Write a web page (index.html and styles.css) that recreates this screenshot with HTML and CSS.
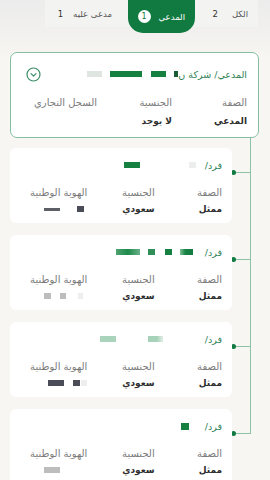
FILE: index.html
```html
<!DOCTYPE html>
<html lang="ar" dir="rtl">
<head>
<meta charset="utf-8">
<title>الأطراف</title>
<link rel="stylesheet" href="styles.css">
</head>
<body>
<nav class="tabs">
  <div class="tab tab-all"><span class="tab-label">الكل</span><span class="tab-count">2</span></div>
  <div class="tab tab-active"><span class="tab-label">المدعي</span><span class="badge">1</span></div>
  <div class="tab tab-def"><span class="tab-label">مدعى عليه</span><span class="tab-count">1</span></div>
</nav>

<section class="main-card">
  <div class="main-title">
    <div class="title-text main-text">المدعي/ شركة ن<span class="rd rd-dark w4 g0"></span><span class="rd rd-green w15 g8"></span><span class="rd rd-green w32 g9"></span><span class="rd rd-light w15 g8"></span></div>
    <svg class="chev" width="15" height="15" viewBox="0 0 15 15"><circle cx="7.5" cy="7.5" r="6.5" fill="none" stroke="#3c8f68" stroke-width="1.2"/><path d="M5 6.6 L7.5 9 L10 6.6" fill="none" stroke="#3c8f68" stroke-width="1.2" stroke-linecap="round" stroke-linejoin="round"/></svg>
  </div>
  <div class="grid main-grid">
    <div class="lbl">الصفة</div><div class="lbl">الجنسية</div><div class="lbl">السجل التجاري</div>
    <div class="val">المدعي</div><div class="val">لا يوجد</div><div class="val"></div>
  </div>
</section>

<div class="timeline">
  <div class="row first">
    <div class="conn"><div class="elbow"></div><div class="hline"><span class="dot"></span><span class="line"></span></div><div class="tail"></div></div>
    <div class="card-col">
      <div class="card">
        <div class="title-text">فرد/<span class="rd rd-pale w7 g9"></span><span class="rd rd-green w16 g49"></span></div>
        <div class="grid">
          <div class="lbl">الصفة</div><div class="lbl">الجنسية</div><div class="lbl">الهوية الوطنية</div>
          <div class="val">ممثل</div><div class="val">سعودي</div><div class="val"><span class="rd rd-slate w7 g3"></span><span class="rd rd-line w16 g17"></span></div>
        </div>
      </div>
    </div>
  </div>

  <div class="row">
    <div class="conn"><div class="elbow"></div><div class="hline"><span class="dot"></span><span class="line"></span></div><div class="tail"></div></div>
    <div class="card-col">
      <div class="card">
        <div class="title-text">فرد/<span class="rd rd-green2 w13 g12"></span><span class="rd rd-green w7 g8"></span><span class="rd rd-green3 w7 g10"></span><span class="rd rd-green4 w24 g8"></span></div>
        <div class="grid">
          <div class="lbl">الصفة</div><div class="lbl">الجنسية</div><div class="lbl">الهوية الوطنية</div>
          <div class="val">ممثل</div><div class="val">سعودي</div><div class="val"><span class="rd rd-faint w5 g4"></span><span class="rd rd-gray w6 g12"></span><span class="rd rd-gray w7 g9"></span></div>
        </div>
      </div>
    </div>
  </div>

  <div class="row">
    <div class="conn"><div class="elbow"></div><div class="hline"><span class="dot"></span><span class="line"></span></div><div class="tail"></div></div>
    <div class="card-col">
      <div class="card">
        <div class="title-text">فرد/<span class="rd rd-mint2 w15 g42"></span><span class="rd rd-mint w16 g32"></span></div>
        <div class="grid">
          <div class="lbl">الصفة</div><div class="lbl">الجنسية</div><div class="lbl">الهوية الوطنية</div>
          <div class="val">ممثل</div><div class="val">سعودي</div><div class="val"><span class="rd rd-faint w6 g0"></span><span class="rd rd-slate w7 g1"></span><span class="rd rd-slate w16 g9"></span></div>
        </div>
      </div>
    </div>
  </div>

  <div class="row last">
    <div class="conn"><div class="elbow"></div><div class="hline"><span class="dot"></span><span class="line"></span></div><div class="tail"></div></div>
    <div class="card-col">
      <div class="card">
        <div class="title-text">فرد/<span class="rd rd-green w8 sq g16"></span></div>
        <div class="grid">
          <div class="lbl">الصفة</div><div class="lbl">الجنسية</div><div class="lbl">الهوية الوطنية</div>
          <div class="val">ممثل</div><div class="val">سعودي</div><div class="val"><span class="rd rd-gray w16 g27"></span></div>
        </div>
      </div>
    </div>
  </div>
</div>
</body>
</html>
```
FILE: styles.css
```css
* { box-sizing: border-box; }
html, body { margin: 0; padding: 0; }
body {
  width: 270px;
  height: 480px;
  overflow: hidden;
  font-family: "DejaVu Sans", "Noto Sans", sans-serif;
  background: linear-gradient(#ececec 0px, #f1f0ee 30px, #f7f6f2 60px, #f7f6f2 100%);
  color: #333;
}

/* Tabs */
.tabs {
  display: flex;
  margin: 0 12px 0 0;
  width: 213px;
  height: 27px;
  background: #f3f3f2;
  align-items: flex-start;
}
.tab {
  display: flex;
  align-items: center;
  height: 27px;
  font-size: 8.5px;
  color: #555;
}
.tab-count { color: #333; }
.tab-all { width: 63px; padding-right: 10px; gap: 14px; }
.tab-active {
  width: 67px;
  height: 33px;
  background: #117a41;
  color: #fff;
  border-radius: 0 0 15px 15px;
  padding-right: 10px;
  gap: 8px;
}
.tab-def { width: 83px; padding-right: 16px; gap: 10px; }
.badge {
  width: 13px;
  height: 13px;
  border-radius: 50%;
  background: #fff;
  color: #117a41;
  font-size: 8px;
  display: flex;
  align-items: center;
  justify-content: center;
}

/* Main card */
.main-card {
  margin: 25px 11px 0 10px;
  height: 86px;
  background: #fff;
  border: 1px solid #86bfa0;
  border-radius: 7px;
  padding: 14px 11px 0 11px;
}
.main-title {
  display: flex;
  justify-content: space-between;
  align-items: center;
  height: 14px;
}
.chev { margin-left: 4px; display: block; }
.title-text {
  display: flex;
  align-items: center;
  height: 14px;
  font-size: 9.5px;
  color: #2e7f57;
  white-space: nowrap;
}
.main-text { font-size: 9.5px; }
.grid {
  display: grid;
  grid-template-columns: repeat(3, 1fr);
  grid-auto-rows: 14px;
  row-gap: 2px;
  margin-top: 14px;
}
.main-grid { margin-top: 15px; row-gap: 4px; }
.lbl {
  font-size: 10px;
  color: #7b7b7b;
  line-height: 14px;
  white-space: nowrap;
}
.val {
  font-size: 9px;
  font-weight: bold;
  color: #2e2e2e;
  line-height: 14px;
  display: flex;
  align-items: center;
  white-space: nowrap;
}

/* redaction blocks (gap = distance from the item on their right) */
.rd { display: inline-block; height: 6px; flex: none; }
.sq { height: 7px; }
.rd-green { background: #15803f; }
.rd-green2 { background: linear-gradient(90deg, #7fbf97, #1a8446 40%, #117a41); }
.rd-green3 { background: #2f8f57; }
.rd-green4 { background: linear-gradient(90deg, #4fa271, #1d8a4a 50%, #6bb28a); }
.rd-dark { background: #1b5e36; }
.rd-light { background: #dfe6e1; }
.rd-pale { background: #eceeed; }
.rd-mint { background: #a9d3bb; }
.rd-mint2 { background: linear-gradient(90deg, #a6d2b9 60%, #e3efe8); }
.rd-slate { background: #4a4d57; }
.rd-gray { background: #bdbdbd; }
.rd-faint { background: #eeeeee; }
.rd-line { background: #5c5f66; height: 3px; }
.w4 { width: 4px; } .w5 { width: 5px; } .w6 { width: 6px; } .w7 { width: 7px; } .w8 { width: 8px; }
.w13 { width: 13px; } .w15 { width: 15px; } .w16 { width: 16px; } .w24 { width: 24px; } .w32 { width: 32px; }
.g0 { margin-right: 0; } .g1 { margin-right: 1px; } .g3 { margin-right: 3px; } .g4 { margin-right: 4px; }
.g8 { margin-right: 8px; } .g9 { margin-right: 9px; } .g10 { margin-right: 10px; } .g12 { margin-right: 12px; }
.g16 { margin-right: 16px; } .g17 { margin-right: 17px; } .g27 { margin-right: 27px; } .g32 { margin-right: 32px; }
.g42 { margin-right: 42px; } .g49 { margin-right: 49px; }

/* Timeline */
.timeline { margin-right: 19px; }
.row { display: flex; }
.conn {
  width: 19px;
  display: flex;
  flex-direction: column;
  direction: ltr;
  flex: none;
}
.elbow { height: 36px; border-right: 1px solid #8cc3a3; }
.first .elbow { height: 34px; }
.hline { display: flex; align-items: center; height: 1px; }
.dot {
  width: 5px;
  height: 5px;
  border-radius: 50%;
  background: #117a41;
  margin-left: -1px;
  flex: none;
}
.line { flex: 1; height: 1px; background: #8cc3a3; }
.tail { flex: 1; border-right: 1px solid #8cc3a3; }
.last .tail { border-right: none; }
.card-col { flex: 1; margin-left: 10px; padding-top: 12px; }
.first .card-col { padding-top: 10px; }
.card {
  height: 75px;
  background: #fff;
  border-radius: 6px;
  padding: 10px 10px 0 10px;
}
```
